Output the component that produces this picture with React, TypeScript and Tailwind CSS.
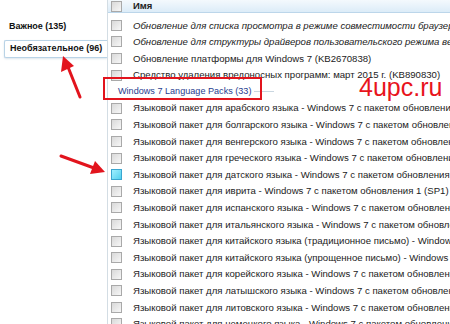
import React from "react";

const rows: { text: string; italic?: boolean; hot?: boolean }[] = [
  { text: "Обновление для списка просмотра в режиме совместимости браузера Internet Explorer", italic: true },
  { text: "Обновление для структуры драйверов пользовательского режима версии 1.11", italic: true },
  { text: "Обновление платформы для Windows 7 (KB2670838)" },
  { text: "Средство удаления вредоносных программ: март 2015 г. (KB890830)" },
];

const packs: { text: string; hot?: boolean }[] = [
  { text: "Языковой пакет для арабского языка - Windows 7 с пакетом обновления 1 (SP1)" },
  { text: "Языковой пакет для болгарского языка - Windows 7 с пакетом обновления 1 (SP1)" },
  { text: "Языковой пакет для венгерского языка - Windows 7 с пакетом обновления 1 (SP1)" },
  { text: "Языковой пакет для греческого языка - Windows 7 с пакетом обновления 1 (SP1)" },
  { text: "Языковой пакет для датского языка - Windows 7 с пакетом обновления 1 (SP1)", hot: true },
  { text: "Языковой пакет для иврита - Windows 7 с пакетом обновления 1 (SP1) (KB2483139)" },
  { text: "Языковой пакет для испанского языка - Windows 7 с пакетом обновления 1 (SP1)" },
  { text: "Языковой пакет для итальянского языка - Windows 7 с пакетом обновления 1 (SP1)" },
  { text: "Языковой пакет для китайского языка (традиционное письмо) - Windows 7 с пакетом" },
  { text: "Языковой пакет для китайского языка (упрощенное письмо) - Windows 7 с пакетом" },
  { text: "Языковой пакет для корейского языка - Windows 7 с пакетом обновления 1 (SP1)" },
  { text: "Языковой пакет для латышского языка - Windows 7 с пакетом обновления 1 (SP1)" },
  { text: "Языковой пакет для литовского языка - Windows 7 с пакетом обновления 1 (SP1)" },
  { text: "Языковой пакет для немецкого языка - Windows 7 с пакетом обновления 1 (SP1)" },
];

const Box = ({ hot }: { hot?: boolean }) => (
  <span
    className={
      hot
        ? "w-[11px] h-[11px] shrink-0 border border-[#3aa6d0] bg-gradient-to-br from-[#9ff0ff] to-[#4fd0ee]"
        : "w-[11px] h-[11px] shrink-0 border border-[#a9a9a9] bg-gradient-to-br from-[#d9d9d9] to-[#f7f7f7]"
    }
  />
);

const Row = ({ text, italic, hot }: { text: string; italic?: boolean; hot?: boolean }) => (
  <div className="h-[16.6px] flex items-center pl-[3px] gap-[11px] whitespace-nowrap">
    <Box hot={hot} />
    <span className={italic ? "italic leading-none" : "leading-none"}>{text}</span>
  </div>
);

export default function App() {
  return (
    <div
      className="relative w-[450px] h-[324px] overflow-hidden bg-white text-[#1b1b1b] text-[9.6px]"
      style={{ fontFamily: '"Liberation Sans", Arial, sans-serif' }}
    >
      <div className="flex h-full">
        {/* left filter panel */}
        <div className="w-[107px] shrink-0 pt-[19px] font-bold text-[9px] text-[#111] whitespace-nowrap">
          <div className="h-[16px] flex items-center pl-[9px]">Важное (135)</div>
          <div className="mt-[5px] ml-[4px] h-[18px] flex items-center pl-[5px] border border-r-0 border-[#b9d3e6] rounded-l-[2px] bg-white shadow-[0_1px_2px_rgba(120,150,180,0.25)]">
            Необязательное (96)
          </div>
        </div>

        {/* update list */}
        <div className="flex-1 min-w-0 border-l border-[#d3dde4]">
          <div className="h-[13px] flex items-center pl-[3px] gap-[11px] bg-gradient-to-b from-[#f4f9fd] to-[#dcecf8] border-b border-[#bcd6ea]">
            <Box />
            <span className="leading-none font-bold text-[9.5px] text-[#222]">Имя</span>
          </div>
          <div className="pt-[4px]">
            {rows.map((r) => (
              <Row key={r.text} text={r.text} italic={r.italic} />
            ))}
            <div className="h-[16.6px] flex items-center pl-[10px] gap-[3px] whitespace-nowrap">
              <span className="leading-none text-[#1f3d8f] text-[9.1px]">Windows 7 Language Packs (33)</span>
              <span className="w-[20px] h-px bg-[#c9d6e0]" />
            </div>
            {packs.map((r) => (
              <Row key={r.text} text={r.text} hot={r.hot} />
            ))}
          </div>
        </div>
      </div>

      {/* annotations */}
      <div className="absolute left-[103px] top-[77px] w-[159px] h-[23px] border-2 border-[#e2141d]" />
      <div
        className="absolute left-[359px] top-[72px] text-[25px] leading-[30px] text-[#e8141c]"
        style={{ fontFamily: '"Liberation Sans", Arial, sans-serif' }}
      >
        4upc.ru
      </div>
      <svg className="absolute inset-0 pointer-events-none" width="450" height="324">
        <line x1="80" y1="97" x2="68" y2="67" stroke="#e2141d" strokeWidth="3" strokeLinecap="round" />
        <polygon points="63,56 61,72 74,66" fill="#e2141d" />
        <line x1="61" y1="156" x2="94" y2="168" stroke="#e2141d" strokeWidth="3" strokeLinecap="round" />
        <polygon points="105,172 90,174 95,161" fill="#e2141d" />
      </svg>
    </div>
  );
}
